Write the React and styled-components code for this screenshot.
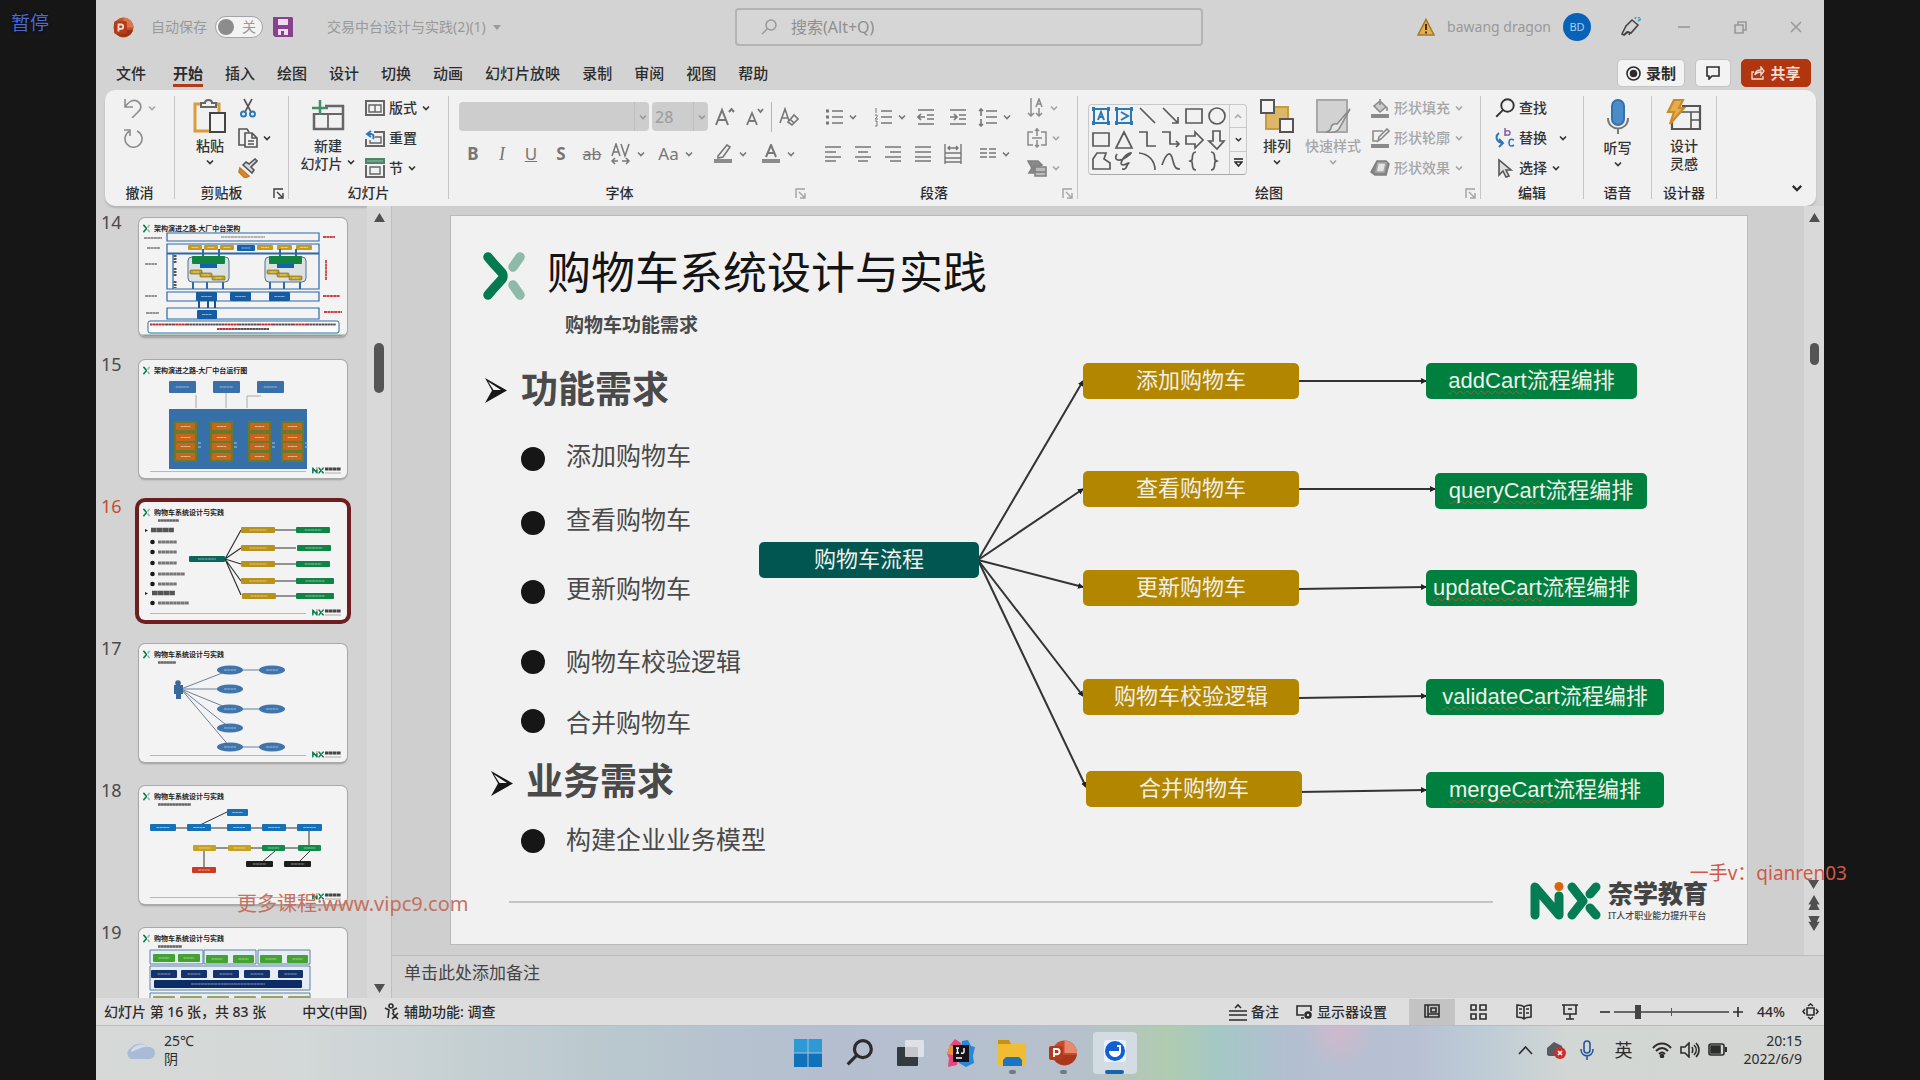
import styled, { createGlobalStyle, css } from "styled-components";

const GlobalStyle = createGlobalStyle`
  * {
    box-sizing: border-box;
  }

  body {
    margin: 0;
    background: #161616;
    font-family: "Noto Sans", "Noto Sans CJK SC", sans-serif;
    font-size: 14px;
    line-height: 18px;
    color: #2c2c2c;
  }

  button, input, select {
    font: inherit;
    color: inherit;
  }

  button {
    background: none;
    border: none;
    padding: 0;
    white-space: nowrap;
  }
`

/* ---------- window ---------- */

const Screen = styled.div`
  position: relative;
  height: 100vh;
  padding: 0 5%;
  overflow: hidden;
`

const Desktop = styled.div`
  height: 100%;
  display: flex;
  flex-direction: column;
  background: #d3d3d3;
`

const TitleBar = styled.header`
  height: 56px;
  flex: none;
  display: grid;
  grid-template-columns: 639px minmax(200px, 468px) 1fr;
  align-items: center;
  padding-bottom: 2px;
  color: #999;
`

const TitleLeft = styled.div`
  display: flex;
  align-items: center;
  padding-left: 17px;
`

const TitleRight = styled.div`
  display: flex;
  align-items: center;
  justify-content: flex-end;
  padding-right: 19px;
`

const AutoSave = styled.label`
  display: flex;
  align-items: center;
  gap: 8px;
  margin: 0 10px 0 17px;
`

const Switch = styled.span`
  display: flex;
  align-items: center;
  justify-content: space-between;
  width: 48px;
  height: 22px;
  padding: 0 6px 0 2px;
  border: 1px solid #a5a5a5;
  border-radius: 11px;
  background: #f3f3f3;

  input {
    appearance: none;
    width: 16px;
    height: 16px;
    margin: 0;
    border-radius: 50%;
    background: #8c8c8c;
  }
`

const FileName = styled.button`
  display: flex;
  align-items: center;
  gap: 7px;
  margin-left: 34px;
`

const SearchBox = styled.label`
  display: flex;
  align-items: center;
  gap: 12px;
  height: 38px;
  padding-left: 24px;
  border: 2px solid #b4b4b4;
  border-radius: 4px;
  background: #d6d6d6;

  input {
    flex: 1;
    min-width: 0;
    border: none;
    outline: none;
    background: none;
    font-size: 16px;
  }

  input::placeholder {
    color: #8f8f8f;
    opacity: 1;
  }
`

const UserName = styled.span`
  margin: 0 12px;
`

const Avatar = styled.span`
  width: 28px;
  height: 28px;
  border-radius: 50%;
  background: #0863b8;
  color: #a9cdf0;
  font-size: 11px;
  line-height: 28px;
  text-align: center;
  margin-right: 30px;
`

const WindowButtons = styled.div`
  display: flex;
  margin-left: 15px;
`

const WindowButton = styled.button`
  display: flex;
  justify-content: center;
  width: 56px;
  color: #999;

  &:last-child {
    width: 18px;
    margin-left: 19px;
  }
`

/* ---------- tabs ---------- */

const TabBar = styled.nav`
  height: 34px;
  flex: none;
  display: flex;
  align-items: center;
  padding: 0 13px 0 20px;
`

const Tab = styled.button`
  height: 28px;
  margin-right: ${props => props.$first ? '27px' : '22px'};
  padding-top: 3px;
  font-size: 15px;
  font-weight: ${props => props.$active ? 700 : 500};
  border-bottom: 3px solid ${props => props.$active ? '#b33a1b' : 'transparent'};
`

const TabActions = styled.div`
  display: flex;
  gap: 10px;
  margin-left: auto;
`

const ActionButton = styled.button`
  display: flex;
  align-items: center;
  justify-content: center;
  gap: 5px;
  width: ${props => props.$w}px;
  height: 28px;
  border-radius: 5px;
  border: 1px solid ${props => props.$primary ? '#b1350e' : '#c4c4c4'};
  background: ${props => props.$primary ? '#b1350e' : '#f3f3f3'};
  color: ${props => props.$primary ? '#f6dcd2' : '#2c2c2c'};
  font-size: 15px;
  font-weight: 700;
`

/* ---------- ribbon ---------- */

const Ribbon = styled.section`
  flex: none;
  display: flex;
  height: 116px;
  margin: 0 8px 0 9px;
  padding: 6px 0 7px;
  border-radius: 10px;
  background: #f1f1f1;
  box-shadow: 0 2px 2px #b4b4b4;
  font-weight: 500;
`

const Group = styled.div`
  flex: none;
  display: flex;
  flex-direction: column;
  width: ${props => props.$w}px;
  border-right: 1px solid ${props => props.$faint ? 'transparent' : '#c6c6c6'};
`

const GroupBody = styled.div`
  flex: 1;
  display: flex;
  align-items: flex-start;
  padding-left: ${props => props.$pad || 0}px;
`

const GroupLabel = styled.div`
  display: grid;
  grid-template-columns: ${props => props.$launcher ? '1fr 20px' : '1fr'};
  align-items: center;
  text-align: center;
  line-height: 12px;
`

const Launcher = styled.button`
  display: flex;
  justify-content: center;
  color: ${props => props.$dim ? '#a2a2a2' : '#3c3c3c'};
`

const Stack = styled.div`
  display: flex;
  flex-direction: column;
  gap: 6px;
  margin-left: ${props => props.$ml || 0}px;
`

const SmallButton = styled.button`
  display: flex;
  align-items: center;
  gap: 4px;
  height: 24px;
  color: ${props => props.$dim ? '#a6a6a6' : '#333'};
`

const BigButton = styled.button`
  display: flex;
  flex-direction: column;
  align-items: center;
  width: ${props => props.$w}px;
  margin-left: ${props => props.$ml || 0}px;
  padding-top: 3px;
  color: ${props => props.$dim ? '#a6a6a6' : '#333'};

  svg:first-child {
    margin-bottom: 4px;
  }
`

const BigLine = styled.span`
  display: flex;
  align-items: center;
  gap: 3px;
  height: 18px;
`

const ToolRows = styled.div`
  display: flex;
  flex-direction: column;
  gap: 7px;
  padding-top: 6px;
  width: ${props => props.$w}px;
`

const ToolRow = styled.div`
  display: flex;
  height: 30px;
  padding-left: ${props => props.$pad || 0}px;
`

const Tool = styled.button`
  flex: none;
  display: flex;
  align-items: center;
  justify-content: center;
  gap: 5px;
  width: ${props => props.$w}px;
  color: #777;
  ${props => props.$line && css`
    border-left: 1px solid #b5b5b5;
  `}
`

const Glyph = styled.span`
  font-size: ${props => props.$size || 17}px;
  font-weight: ${props => props.$bold ? 700 : 400};
  font-style: ${props => props.$italic ? 'italic' : 'normal'};
  font-family: ${props => props.$serif ? '"Liberation Serif", serif' : 'inherit'};
  text-decoration: ${props => props.$deco || 'none'};
`

const Picker = styled.span`
  display: flex;
  align-items: center;
  width: ${props => props.$w}px;
  height: 29px;
  margin-right: 3px;
  padding-right: 1px;
  border-radius: 4px;
  background: #cdcdcd;
  color: #999;

  select {
    appearance: none;
    flex: 1;
    min-width: 0;
    height: 29px;
    padding-left: 3px;
    border: none;
    border-right: 1px solid #bdbdbd;
    margin-right: 3px;
    background: none;
    color: #a0a0a0;
    font-size: 16px;
    opacity: 1;
  }
`

const Gallery = styled.div`
  display: flex;
  width: 159px;
  height: 71px;
  margin-top: 8px;
  border: 1px solid #c9c9c9;
  border-bottom-color: #a8a8a8;
  border-radius: 4px;
`

const GalleryArrows = styled.div`
  display: flex;
  flex-direction: column;
  width: 17px;
  border-left: 1px solid #c9c9c9;

  button {
    flex: 1;
    display: flex;
    align-items: center;
    justify-content: center;
  }

  button + button {
    border-top: 1px solid #c9c9c9;
  }
`

const Collapse = styled.button`
  align-self: flex-end;
  margin: 0 12px 0 auto;
`

/* ---------- workspace ---------- */

const Workspace = styled.main`
  flex: 1;
  min-height: 0;
  display: grid;
  grid-template-columns: 296px minmax(0, 1fr);
`

const ThumbPanel = styled.aside`
  min-height: 0;
  overflow: hidden;
  display: flex;
  border-right: 1px solid #bfbfbf;
`

const ThumbList = styled.ol`
  flex: 1;
  margin: 0;
  padding: 12px 0 0 5px;
  list-style: none;
  display: flex;
  flex-direction: column;
  gap: 24px;
`

const ThumbRow = styled.li`
  flex: none;
  display: grid;
  grid-template-columns: 38px 208px;
  height: 118px;
  font-size: 18px;
  line-height: 8px;
  color: ${props => props.$active ? '#c04f30' : '#4a4a4a'};
`

const ThumbCard = styled.button`
  display: block;
  height: 118px;
  overflow: hidden;
  border-radius: 6px;
  background: #f3f3f3;
  box-shadow: ${props => props.$active ? '0 0 0 4px #6d1f1f' : '0 0 0 1px #a9a9a9, 0 2px 2px #9d9d9d'};

  svg {
    display: block;
  }
`

const ScrollTrack = styled.div`
  flex: none;
  display: flex;
  flex-direction: column;
  align-items: center;
  width: ${props => props.$w}px;
  padding: 7px 0 5px;
  background: #d9d9d9;
  color: #505050;
`

const ScrollSpace = styled.div`
  flex: ${props => props.$grow};
`

const ScrollThumb = styled.div`
  width: ${props => props.$w}px;
  height: ${props => props.$h}px;
  border-radius: 5px;
  background: #555;
`

const Editor = styled.div`
  min-height: 0;
  display: flex;
  flex-direction: column;
`

const StageRow = styled.div`
  flex: 1;
  min-height: 0;
  display: flex;
  background: #cfcfcf;
`

const Stage = styled.div`
  flex: 1;
  min-width: 0;
  padding: 10px 57px 0 59px;
`

const Notes = styled.div`
  flex: none;
  height: 43px;
  padding: 8px 12px;
  border-top: 1px solid #bcbcbc;
  font-size: 17px;
  color: #444;
`

/* the slide is 1296 x 728 units, every object on it is placed in percent */
const Slide = styled.article`
  position: relative;
  aspect-ratio: 1296 / 728;
  background: #f1f1f1;
  outline: 1px solid #bababa;
`

const SlideObject = styled.div`
  position: absolute;
  left: ${props => props.$x / 12.96}%;
  top: ${props => props.$y / 7.28}%;
  display: flex;
  align-items: center;
`

const SlideText = styled(SlideObject)`
  margin: 0;
  transform: translateY(-50%);
  white-space: nowrap;
  font-size: ${props => props.$size}px;
  line-height: ${props => props.$size}px;
  font-weight: ${props => props.$bold ? 700 : 400};
  color: ${props => props.$color || '#4a4a4a'};
`

const Bullet = styled(SlideObject)`
  width: 24px;
  height: 24px;
  border-radius: 50%;
  background: #161616;
`

const Node = styled(SlideObject)`
  justify-content: center;
  width: ${props => props.$w / 12.96}%;
  height: 36px;
  border-radius: 5px;
  background: ${props => props.$fill};
  color: #f0f0ea;
  font-family: "Liberation Sans", "Noto Sans CJK SC", sans-serif;
  font-size: 22px;
  line-height: 26px;
  white-space: nowrap;

  u {
    text-decoration: underline wavy #a85a30 1px;
    text-underline-offset: 2px;
    text-decoration-skip-ink: none;
  }
`

const Lines = styled.svg`
  position: absolute;
  inset: 0;
  width: 100%;
  height: 100%;
`

const Brand = styled(SlideObject)`
  gap: 7px;
`

const BrandText = styled.div`
  display: flex;
  flex-direction: column;
  gap: 5px;
  white-space: nowrap;
  color: #444;

  strong {
    font-size: 25px;
    line-height: 25px;
    font-weight: 900;
  }

  small {
    font-size: 9px;
    line-height: 9px;
    font-weight: 500;
  }
`

/* ---------- status bar ---------- */

const StatusBar = styled.footer`
  flex: none;
  display: flex;
  align-items: center;
  height: 28px;
  padding: 0 5px 0 8px;
  background: #dedede;
  border-bottom: 1px solid #b9bdbe;
  font-weight: 500;
`

const StatusItem = styled.button`
  display: flex;
  align-items: center;
  gap: 4px;
  margin-left: ${props => props.$ml || 0}px;
`

const StatusRight = styled.div`
  display: flex;
  align-items: center;
  margin-left: auto;
`

const ViewButton = styled.button`
  display: flex;
  align-items: center;
  justify-content: center;
  width: 46px;
  height: 26px;
  background: ${props => props.$active ? '#c3c3c3' : 'none'};
`

const ZoomRange = styled.input`
  appearance: none;
  width: 115px;
  height: 16px;
  margin: 0 4px;
  background:
    linear-gradient(#555, #555) 57px 50% / 1px 8px no-repeat,
    linear-gradient(#666, #666) 0 50% / 100% 2px no-repeat;

  &::-webkit-slider-thumb {
    appearance: none;
    width: 6px;
    height: 14px;
    background: #444;
  }
`

/* ---------- taskbar ---------- */

const Taskbar = styled.footer`
  flex: none;
  display: grid;
  grid-template-columns: 1fr auto 1fr;
  align-items: center;
  height: 54px;
  padding: 0 22px 6px 28px;
  background:
    radial-gradient(circle at 72% 10%, #cfb9cb 0, transparent 3%),
    linear-gradient(90deg, #d6d9d7 0, #d3d8d8 12%, #b9c8ce 30%, #b4bed0 42%, #b6c1cc 57%, #b0cbb0 62%, #a4c8c6 65%, #b3bfd0 69%, #b8c0d3 76%, #bccbd6 80%, #d2d6d4 85%, #d4d6d3 100%);
`

const Weather = styled.div`
  display: flex;
  align-items: center;
  gap: 8px;
`

const Apps = styled.div`
  display: flex;
  align-items: flex-start;
  padding-top: 5px;
  margin-right: 7px;
`

const AppButton = styled.button`
  display: flex;
  flex-direction: column;
  align-items: center;
  justify-content: space-between;
  width: ${props => props.$active ? 44 : 51}px;
  height: 42px;
  margin-left: ${props => props.$active ? 4 : 0}px;
  padding-top: 7px;
  border-radius: 4px;
  background: ${props => props.$active ? '#d3dce2' : 'none'};

  &::after {
    content: "";
    width: ${props => props.$active ? 19 : 7}px;
    height: 4px;
    border-radius: 2px;
    background: ${props => props.$active ? '#1763ae' : props.$open ? '#737982' : 'transparent'};
  }
`

const Tray = styled.div`
  display: flex;
  align-items: center;
  justify-content: flex-end;
  gap: 8px;
`

const TrayLanguage = styled.span`
  margin: 0 11px 0 12px;
  font-size: 18px;
`

const TrayGroup = styled.span`
  display: flex;
  align-items: center;
  gap: 13px;
`

const Clock = styled.time`
  margin-left: 8px;
  text-align: right;
`

/* ---------- overlays ---------- */

const PauseTag = styled.div`
  position: absolute;
  left: 11px;
  top: 12px;
  font-size: 19px;
  line-height: 22px;
  color: #4a68d8;
  text-shadow: 0 0 3px #000;
`

const Watermark = styled.div`
  position: absolute;
  ${props => props.$side === 'left' ? 'left: 237px;' : 'right: 73px;'}
  top: ${props => props.$top}px;
  font-size: ${props => props.$size}px;
  line-height: 24px;
  color: ${props => props.$side === 'left' ? '#c4715f' : '#d0594a'};
`

/* ---------- icons ---------- */

const Svg = ({ w = 20, h = 20, vb, children, ...rest }) => (
  <svg width={w} height={h} viewBox={vb || `0 0 ${w} ${h}`} fill="none" stroke="currentColor" strokeWidth="1.6" aria-hidden="true" {...rest}>{children}</svg>
)

const Chevron = ({ w = 10 }) => <Svg w={w} h={w} vb="0 0 10 10"><path d="M2 3.500 5 6.500 8 3.500" /></Svg>
const Caret = () => <Svg w={8} h={5} stroke="none" fill="currentColor"><path d="M0 0h8L4 5z" /></Svg>
const LaunchIcon = () => <Svg w={11} h={11} strokeWidth="1.4"><path d="M1 10V1h9M4 4l5 5M10 5v5H5" /></Svg>
const Triangle = ({ down }) => <Svg w={11} h={9} stroke="none" fill="currentColor"><path d={down ? "M0 0h11L5.500 9z" : "M0 9h11L5.500 0z"} /></Svg>
const DoubleTriangle = ({ down }) => <Svg w={12} h={15} vb="0 0 12 16" stroke="none" fill="currentColor"><path d={down ? "M0 0h12L9 6h3L6 16 0 6h3z" : "M0 16h12L9 10h3L6 0 0 10h3z"} /></Svg>

const PptIcon = ({ size = 22 }) => (
  <Svg w={size} h={size} vb="0 0 28 28" stroke="none">
    <circle cx="15.500" cy="14" r="12.500" fill="#c9492a" />
    <path d="M15.500 1.500a12.500 12.500 0 0 1 12.500 12.500h-12.500z" fill="#e58a6c" />
    <path d="M3.200 16a12.500 12.500 0 0 0 24.600 0z" fill="#a8381c" />
    <rect x="0" y="7" width="14" height="14" rx="2" fill="#b23a1a" />
    <path d="M5 18v-8h3a2.600 2.600 0 0 1 0 5.200H5" stroke="#fff" strokeWidth="1.900" />
  </Svg>
)

/* the title bar logo has a wider, darker tile than the taskbar one */
const PptBadge = () => (
  <Svg w={21} h={21} stroke="none">
    <circle cx="10.500" cy="10.500" r="10" fill="#c4512c" />
    <path d="M10.500.500a10 10 0 0 1 10 10h-10z" fill="#d9764f" />
    <path d="M1 13a10 10 0 0 0 19 0z" fill="#9c3314" />
    <rect x="1" y="4" width="13" height="13" rx="2" fill="#b53c18" />
    <path d="M5.500 14.500V7.500H8a2.200 2.200 0 0 1 0 4.400H5.500" stroke="#f5ddd2" strokeWidth="1.800" />
  </Svg>
)

const SaveIcon = () => (
  <Svg w={20} h={20} stroke="none">
    <path d="M0 0h19l1 1v19H2l-2-2V0z" fill="#88418f" />
    <path d="M5 2h10v6H5zM5 12h10v6H5z" fill="#eedcf0" />
    <path d="M8 14h3v4H8z" fill="#88418f" />
  </Svg>
)

const SearchIcon = ({ size = 16, sw = 1.500 }) => <Svg w={size} h={size} vb="0 0 16 16" strokeWidth={sw}><circle cx="10" cy="6" r="5" /><path d="M6.300 9.700 1 15" /></Svg>
const WarnIcon = () => <Svg w={18} h={18}><path d="M9 1.500 17 17H1z" fill="#e2ae4e" stroke="#a87826" /><path d="M9 6v6M9 13.500v2" stroke="#443018" strokeWidth="2" /></Svg>
const PenIcon = () => <Svg w={20} h={20} stroke="#444"><path d="M11 3 17 8 10 16 7 15 3 18 1 17 5 9z" /><path d="M3 18l3-3 3 1-1 2" /><path d="M14 2l1-2M17 4l3-2M17 1l2-1" stroke="#3aa0c0" /></Svg>
const UndoIcon = () => <Svg stroke="#8d8d8d"><path d="M2 1v8h8M2 9C5 4 10 1 14 3c5 3 5 8 1 11l-6 6" /></Svg>
const RedoIcon = () => <Svg stroke="#8d8d8d"><path d="M1 2h6v6M7 3a8.500 8.500 0 1 0 7 0" /></Svg>

const PasteIcon = () => (
  <Svg w={34} h={34} strokeWidth="2">
    <path d="M9 5H2v27h15M22 5h4v8" stroke="#dd9c3a" strokeWidth="3" />
    <path d="M8 8V4h4c0-4 7-4 7 0h4v4z" fill="#f1f1f1" stroke="#666" />
    <path d="M17 14h15v19H17z" fill="#f4f4f4" stroke="#444" />
  </Svg>
)
const CutIcon = () => <Svg stroke="#555"><path d="M6 1l7 13M14 1 7 14" /><circle cx="5.500" cy="16" r="2.500" stroke="#2b78b8" strokeWidth="2" /><circle cx="14.500" cy="16" r="2.500" stroke="#2b78b8" strokeWidth="2" /></Svg>
const CopyIcon = () => <Svg stroke="#555"><path d="M7 17H1V1h8l2 3M7 5h7l5 5v9H7zM14 5v5h5M10 13h6M10 16h6" /></Svg>
const BrushIcon = () => <Svg><path d="M2 10l9 8-4 2-6-6z" fill="#dc8a28" stroke="#c87820" /><path d="M5 7l9 8 2-3-3-3 6-6-2-2-6 5-3-2z" fill="#d8d8d8" stroke="#555" /></Svg>
const NewSlideIcon = () => <Svg w={34} h={34} strokeWidth="2.500" stroke="#666"><path d="M14 7h18v23H3V14" /><path d="M3 15h29M17 15v15" strokeWidth="1.800" /><path d="M9 1v15M1 9h16" stroke="#3f9068" /></Svg>
const LayoutIcon = () => <Svg w={20} h={16} strokeWidth="2" stroke="#666"><path d="M1 1h18v14H1z" /><path d="M4 5h12v7H4zM10 5v7" strokeWidth="1.400" /></Svg>
const ResetIcon = () => <Svg w={20} h={17} strokeWidth="2" stroke="#666"><path d="M9 2h10v14H1V9" /><path d="M10 7h6v6H5v-3" strokeWidth="1.400" /><path d="M6 1 2 4l4 3M2 4h4c3 0 3 3 2 5" stroke="#2b78b8" /></Svg>
const SectionIcon = () => <Svg w={20} h={20} strokeWidth="2" stroke="#666"><path d="M1 1h18v4H1z" fill="#6fa486" stroke="#4f8468" /><path d="M1 7v12h18V7" /><path d="M5 9h10v7H5z" strokeWidth="1.400" /></Svg>

const ClearIcon = () => <Svg><path d="M1 16 6 2l4 12M3 11h6" /><path d="m9 15 6-7 4 4-6 6zM11 12l4 4" /></Svg>
const HighlightIcon = () => <Svg><path d="M5 12 14 1l3 2-7 10-5 1z" /><path d="M1 17h18" strokeWidth="4" stroke="#8c8c8c" /></Svg>
const FontColorIcon = () => <Svg><path d="M5 13 10 1l5 12M7 9h6" strokeWidth="2" /><path d="M1 17h18" strokeWidth="4" stroke="#8c8c8c" /></Svg>
const SpacingIcon = () => <Svg w={20} h={22} strokeWidth="1.500"><path d="m1 13 4-12 4 12M2.500 9h5M10 1l4 12 4-12M1 18h6M11 18h7M4 15l-3 3 3 3M15 15l3 3-3 3" /></Svg>
const BulletsIcon = () => <Svg w={18} h={18}><path d="M7 3h11M7 9h11M7 15h11" /><path d="M1 3h3M1 9h3M1 15h3" strokeWidth="3" /></Svg>
const NumbersIcon = () => <Svg w={18} h={20}><path d="M7 4h11M7 10h11M7 16h11" /><path d="M2 1v5M1 8h2v2l-2 2h3M1 14h2v5H1" strokeWidth="1" /></Svg>
const IndentIcon = ({ out }) => <Svg w={18} h={18}><path d="M1 2h16M10 7h7M10 11h7M1 16h16" /><path d={out ? "M8 9H1M4 6 1 9l3 3" : "M1 9h7M5 6l3 3-3 3"} /></Svg>
const LineSpaceIcon = () => <Svg w={19} h={19}><path d="M8 3h11M8 9h11M8 15h11M3 1v7M3 11v7M1 3l2-2 2 2M1 16l2 2 2-2" /></Svg>
const AlignIcon = ({ d }) => <Svg w={18} h={18}><path d={d} /></Svg>
const DistributeIcon = () => <Svg w={18} h={20}><path d="M1 0v20M17 0v20M1 9h16M1 14h16M1 18h16M4 4h10M6 2 4 4l2 2M12 2l2 2-2 2" strokeWidth="1.400" /></Svg>
const ColumnsIcon = () => <Svg w={16} h={14}><path d="M0 2h7M0 6h7M0 10h7M9 2h7M9 6h7M9 10h7" /></Svg>
const TextDirIcon = () => <Svg w={18} h={20}><path d="M4 0v18M1 15l3 3 3-3M12 10v8M9 15l3 3 3-3M9 9l3-8 3 8M10 6h4" strokeWidth="1.500" stroke="#8a8a8a" /></Svg>
const TextAlignIcon = () => <Svg w={20} h={20}><path d="M6 4H1v13h5M14 4h5v13h-5M5 10h10M10 0v8M10 12v8M8 3l2-2 2 2M8 17l2 2 2-2" strokeWidth="1.500" stroke="#8a8a8a" /></Svg>
const SmartArtIcon = () => <Svg w={20} h={18} stroke="#808080"><path d="M1 2h10l4 4-2 1H7v7H2l3-5z" fill="#8a8a8a" /><path d="M8 8h11v9H8z" fill="#bbb" /><path d="M8 13h11" /></Svg>

const ArrangeIcon = () => <Svg w={34} h={34} strokeWidth="2"><path d="M6 8h22v22H6z" fill="#dcb767" stroke="#c99a3c" /><path d="M1 1h13v13H1zM20 20h13v13H20z" fill="#f4f4f4" stroke="#555" /></Svg>
const QuickStyleIcon = () => <Svg w={36} h={34}><path d="M2 1h30v32H2z" fill="#d2d2d2" stroke="#a8a8a8" strokeWidth="2" /><path d="M35 10 22 25c-3-1-6 1-6 4 0 2-2 3-4 4 6 1 11 0 13-5z" fill="#e6e6e6" stroke="#8c8c8c" /></Svg>
const FillIcon = () => <Svg stroke="#8a8a8a"><path d="m4 8 6-5 6 6-6 5zM10 1v6M17 9v4" fill="#ccc" /><path d="M1 18h18" strokeWidth="4" /></Svg>
const OutlineIcon = () => <Svg stroke="#8a8a8a"><path d="M13 3H3v10h4M8 13l1-4 8-8 2 2-8 8z" /><path d="M1 18h18" strokeWidth="4" /></Svg>
const EffectIcon = () => <Svg><path d="m7 3 9 0 3 3-3 11H5l-4-3z" fill="#888" stroke="#808080" /><path d="M8 5h8l-2 9H6z" fill="#e4e4e4" /></Svg>
const ReplaceIcon = () => <Svg w={20} h={22}><path d="M10 1v8M10 6c0-3 5-3 5 0s-5 3-5 0" stroke="#8c6aa8" /><path d="M19 13c-4-2-5 0-5 3s2 4 5 2" stroke="#2b78b8" /><path d="M4 6c-4 3-3 9 3 10M4 12l4 4-4 4" stroke="#2b78b8" strokeWidth="2" /></Svg>
const CursorIcon = () => <Svg><path d="M4 2v15l4-4 3 6 3-1-3-6h5z" fill="#ddd" stroke="#555" /></Svg>
const MicIcon = () => <Svg w={24} h={36} strokeWidth="2" stroke="#777"><rect x="6" y="1" width="12" height="25" rx="6" fill="#4a8bc8" stroke="#3571aa" /><path d="M2 19c0 14 20 14 20 0M12 29v6" /></Svg>
const IdeasIcon = () => <Svg w={36} h={34} strokeWidth="2.200" stroke="#555"><path d="M16 7h18v23H6v-8" /><path d="M15 13h19M25 13v17M25 21h9" strokeWidth="1.600" /><path d="M8 1h9l-4 8h5L4 25l4-12H2z" fill="#e4ad50" stroke="#cc8a26" /></Svg>

const ShapeGallery = () => (
  <Svg w={140} h={69} strokeWidth="1.700" stroke="#5a5a5a">
    <g stroke="#2c78b4" strokeWidth="2">
      <path d="M5 4h14v14H5z" /><path d="M28 4h14v14H28z" />
      <path d="m9 15 3-8 3 8M10 12h4M32 7l7 4-7 4" />
      <path d="M3 4h3M18 4h3M3 18h3M18 18h3M26 4h3M41 4h3M26 18h3M41 18h3" strokeWidth="4" />
    </g>
    <path d="m51 3 15 15M74 3l15 15M89 12v6h-6M97 4h16v14H97z" /><circle cx="128" cy="11" r="8" />
    <path d="M4 28h16v13H4zM35 27l8 16H27zM50 27h8v14h9M73 27h8v12h9M87 36l3 3-3 3M97 31h9v-4l8 8-8 8v-4h-9zM124 26h7v10h4l-7 8-8-8h4z" />
    <path d="M4 64V54l4-6h9l-2 6 6 4v6zM28 49c-4 6 2 8 8 4 4-3 8-6 5-5-6 2-12 12-7 12 3 0 8-4 5-1-2 2-1 6-6 5M50 48c10 1 16 8 16 17M73 60c5-14 9-14 11-4 2 8 4 8 7 8M107 47c-5 0-3 6-4 8l-2 1 2 1c1 2-1 8 4 8M122 47c5 0 3 6 4 8l2 1-2 1c-1 2 1 8-4 8" />
  </Svg>
)

const NxLogo = ({ w = 71, h = 38 }) => (
  <Svg w={w} h={h} vb="0 0 71 38" stroke="#047d55" strokeWidth="9" strokeLinecap="round" strokeLinejoin="round">
    <path d="M5 33V5l24 28V14" />
    <path d="m42 5 11 14-11 14M66 5l-6 7M66 33l-6-7" />
    <circle cx="29" cy="4.500" r="4.500" fill="#d9660c" stroke="none" />
  </Svg>
)

const XMark = ({ w = 42, h = 48 }) => (
  <Svg w={w} h={h} vb="0 0 42 48" strokeWidth="9.500" strokeLinecap="round" strokeLinejoin="round">
    <path d="m37 5-7 10M37 43l-7-10" stroke="#8dbaa9" />
    <path d="M5 5c13 16 15 15 15 19S18 27 5 43" stroke="#047a50" />
  </Svg>
)

const ArrowMark = () => (
  <Svg w={22} h={25} stroke="none">
    <path d="M0 0l22 12.500L0 25l7-12.500z" fill="#161616" />
    <path d="M3 3.500l13 8.500H8.500z" fill="#f1f1f1" />
  </Svg>
)

/* ---------- thumbnails ---------- */

const Boxes = ({ items, h, fill, rx = 1, ...rest }) => items.map(([x, y, w]) => (
  <g key={`${x}-${y}`}>
    <rect x={x} y={y} width={w} height={h} rx={rx} fill={fill} {...rest} />
    <path d={`M${x + w * 0.25} ${y + h / 2}h${w * 0.5}`} stroke="#fff" strokeOpacity=".5" strokeWidth="1" strokeDasharray="3 .3" />
  </g>
))

const ThumbFrame = ({ title, sub, brand = true, children }) => (
  <svg width="208" height="118" viewBox="0 0 208 118" aria-hidden="true">
    <g transform="translate(4 6)"><XMark w={7} h={9} /></g>
    <text x="15" y="13" fontSize="7" fontWeight="700" fill="#222">{title}</text>
    {sub && <path d={`M19 18.500h${sub}`} stroke="#666" strokeWidth="2.500" strokeDasharray="2.800 .2" />}
    {children}
    {brand && <>
      <path d="M11 111.500h156" stroke="#aaa" strokeWidth=".8" />
      <g transform="translate(173 107)"><NxLogo w={12} h={7} /></g>
      <path d="M186 109h16" stroke="#444" strokeWidth="3" strokeDasharray="3.500 .4" />
      <path d="M186 113h16" stroke="#999" strokeWidth=".8" />
    </>}
  </svg>
)

const Thumb14 = () => (
  <ThumbFrame title="架构演进之路-大厂中台架构" brand={false}>
    <g fill="none" stroke="#2a68a8" strokeWidth="1.200">
      <path d="M28 15h152v8H28zM28 26h152v9H28zM28 36h152v35H28zM28 74h152v9H28zM28 90h152v11H28zM34 36v35" />
    </g>
    <path d="M82 19h44" stroke="#777" strokeDasharray="3 .3" />
    <path d="M5 20h18M8 30h13M6 46h12M6 78h12M7 95h13" stroke="#777" strokeWidth="1.500" strokeDasharray="3 .3" />
    <path d="M184 19h12M184 78h17M185 94h18M187 42v20" stroke="#c44" strokeWidth="1.800" strokeDasharray="3 .4" />
    <path d="M36 37v33" stroke="#555" strokeWidth="3" strokeDasharray="2 1 2 1 2 5" />
    <Boxes items={[[49, 27, 14], [65, 27, 14], [81, 27, 14], [118, 27, 16], [138, 27, 15], [157, 27, 16]]} h={5} fill="#c99a1c" />
    <Boxes items={[[98, 27, 18]]} h={6} fill="#1462ac" />
    {[0, 77].map(x => (
      <g key={x} transform={`translate(${x} 0)`}>
        <path d="M64 31v8M80 31v8M54 64v7M68 64v7M84 64v7" stroke="#2a68a8" strokeWidth="2" />
        <rect x="49" y="39" width="41" height="25" rx="4" fill="#dce2e4" stroke="#52718c" />
        <rect x="53" y="38" width="33" height="8" rx="1" fill="#118442" />
        <rect x="61" y="46" width="17" height="4" fill="#1462ac" />
        <Boxes items={[[51, 52, 12], [61, 55, 12], [73, 58, 13]]} h={4} fill="#c9a41c" stroke="#665a22" strokeWidth=".6" />
      </g>
    ))}
    <Boxes items={[[57, 74, 21], [91, 74, 21], [130, 74, 21], [58, 92, 20]]} h={9} fill="#145ca4" />
    <path d="M60 83v7M69 83v7M76 83v7" stroke="#245082" strokeWidth="2" />
    <rect x="9" y="103" width="191" height="12" rx="2" fill="#fff" stroke="#2a68a8" />
    <path d="M11 106.500h16M34 106.500h14M86 106.500h14M120 106.500h14M154 106.500h14M78 111h18" stroke="#c23030" strokeWidth="2.200" strokeDasharray="2.600 .3" />
    <path d="M27 106.500h7M48 106.500h38M100 106.500h20M134 106.500h20M168 106.500h29M96 111h34" stroke="#5c5058" strokeWidth="2" strokeDasharray="2.600 .3" />
    <path d="M0 117.500h208" stroke="#7fa98a" strokeWidth="2" />
  </ThumbFrame>
)

const Thumb15 = () => (
  <ThumbFrame title="架构演进之路-大厂中台运行图">
    <Boxes items={[[30, 21, 27], [74, 21, 27], [118, 21, 27]]} h={12} fill="#3a70aa" />
    <path d="M57 35v13M87 33v15M108 48V36h14" stroke="#aaa" fill="none" />
    <rect x="30" y="49" width="138" height="60" fill="#376fa8" />
    {[35, 71, 109, 142].map(x => (
      <g key={x}>
        <rect x={x} y="61" width="23" height="41" fill="#687a2c" />
        <Boxes items={[[x + 2, 63, 19], [x + 2, 74, 19], [x + 2, 83, 19], [x + 2, 93, 19]]} h={7} fill="#c9651a" />
        <path d={`M${x + 24} 83h3M${x + 24} 87h3`} stroke="#a8c6de" />
      </g>
    ))}
  </ThumbFrame>
)

const Thumb16 = () => (
  <ThumbFrame title="购物车系统设计与实践" sub={21}>
    <path d="M12 28h23M13 91h23" stroke="#555" strokeWidth="4.500" strokeDasharray="5.500 .3" />
    <path d="M19 40h19M19 50h19M19 61h19M19 72h27M19 82h19M19 101h31" stroke="#777" strokeWidth="2.800" strokeDasharray="3.500 .3" />
    {[40, 50, 61, 72, 82, 101].map(y => <circle key={y} cx="13.500" cy={y} r="2.300" fill="#1a1a1a" />)}
    <path d="m6 27 3 1.500L6 30M6 90l3 1.500L6 93" fill="#222" />
    <path d="M86 57 102 28M86 57l16-11M86 57l16 5M86 57l16 22M86 57l16 36M136 28h21M136 46h21M136 62h21M136 79h21M136 94h21" stroke="#333" strokeWidth="1.200" />
    <Boxes items={[[50, 54, 36]]} h={6} fill="#0b655c" />
    <Boxes items={[[102, 25, 34], [102, 43, 34], [102, 59, 34], [102, 76, 34], [103, 91, 34]]} h={6} fill="#b8921a" />
    <Boxes items={[[157, 25, 34], [158, 43, 34], [157, 59, 34], [157, 76, 38], [157, 91, 38]]} h={6} fill="#108446" />
  </ThumbFrame>
)

const Thumb17 = () => (
  <ThumbFrame title="购物车系统设计与实践" sub={18}>
    <path d="M42 45 91 26M42 45h49M42 45l49 20M42 45l49 39M42 45l49 58M91 26h42M91 65h42M91 103h42" stroke="#6c8099" strokeWidth="1" />
    {[[91, 26], [133, 26], [91, 45], [91, 65], [133, 65], [91, 84], [91, 103], [133, 103]].map(([x, y]) => (
      <g key={`${x}-${y}`}>
        <ellipse cx={x} cy={y} rx="13" ry="4.500" fill="#3f74ac" />
        <path d={`M${x - 6} ${y}h12`} stroke="#9fbad6" strokeDasharray="3 .3" />
      </g>
    ))}
    <circle cx="39" cy="39" r="2.800" fill="#38699c" />
    <path d="M35 41h9v9h-2v5h-5v-5h-2z" fill="#38699c" />
  </ThumbFrame>
)

const Thumb18 = () => (
  <ThumbFrame title="购物车系统设计与实践" sub={33}>
    <path d="M36 42h122M61 39l27-13M170 44v18M60 62h110M65 64v20M136 65l-14 12M171 65l-12 12" stroke="#333" strokeWidth="1" />
    <Boxes items={[[11, 38, 26], [48, 38, 24], [88, 38, 24], [123, 38, 24], [158, 38, 25], [88, 23, 21]]} h={7} fill="#1670b8" />
    <Boxes items={[[54, 59, 23], [89, 59, 23]]} h={6} fill="#c9a21c" />
    <Boxes items={[[123, 59, 23], [159, 59, 23]]} h={6} fill="#128a48" />
    <Boxes items={[[107, 75, 27], [145, 75, 27]]} h={6} fill="#1d1d1d" />
    <Boxes items={[[53, 81, 24]]} h={6} fill="#cc3a22" />
  </ThumbFrame>
)

const Thumb19 = () => (
  <ThumbFrame title="购物车系统设计与实践" sub={24} brand={false}>
    <path d="M11 22h53v14H11zM65 22h52v14H65zM119 22h52v14h-52zM11 38h160v24H11zM11 65h160v40H11z" fill="#e6eef4" stroke="#5a82a4" />
    <Boxes items={[[14, 26, 22], [39, 26, 22], [67, 27, 22], [94, 27, 21], [121, 27, 22], [148, 27, 21]]} h={8} fill="#42a232" />
    <Boxes items={[[12, 42, 26], [42, 42, 26], [74, 42, 26], [105, 42, 26], [139, 42, 25]]} h={8} fill="#14326c" />
    <Boxes items={[[15, 52, 148]]} h={8} fill="#0c2c66" />
    <Boxes items={[[14, 68, 22], [41, 68, 22], [68, 68, 22], [95, 68, 22], [122, 68, 22], [149, 68, 22]]} h={8} fill="#98a45c" />
  </ThumbFrame>
)

/* ---------- data ---------- */

const tabs = ['文件', '开始', '插入', '绘图', '设计', '切换', '动画', '幻灯片放映', '录制', '审阅', '视图', '帮助']

const thumbs = [
  { n: 14, Art: Thumb14 },
  { n: 15, Art: Thumb15 },
  { n: 16, Art: Thumb16, active: true },
  { n: 17, Art: Thumb17 },
  { n: 18, Art: Thumb18 },
  { n: 19, Art: Thumb19 },
]

const outline = [
  { y: 239, dot: 231, text: '添加购物车' },
  { y: 303, dot: 295, text: '查看购物车' },
  { y: 372, dot: 364, text: '更新购物车' },
  { y: 445, dot: 434, text: '购物车校验逻辑' },
  { y: 506, dot: 493, text: '合并购物车' },
  { y: 623, dot: 613, text: '构建企业业务模型' },
]

const steps = [
  { x: 632, y: 147, text: '添加购物车' },
  { x: 632, y: 255, text: '查看购物车' },
  { x: 632, y: 354, text: '更新购物车' },
  { x: 632, y: 463, text: '购物车校验逻辑' },
  { x: 635, y: 555, text: '合并购物车' },
]

const flows = [
  { x: 975, y: 147, w: 211, name: 'addCart' },
  { x: 984, y: 257, w: 212, name: 'queryCart' },
  { x: 975, y: 354, w: 211, name: 'updateCart' },
  { x: 975, y: 463, w: 238, name: 'validateCart' },
  { x: 975, y: 556, w: 238, name: 'mergeCart' },
]

const links = [
  [527, 344, 632, 165], [527, 344, 632, 273], [527, 344, 632, 371], [527, 344, 632, 480], [527, 344, 635, 571],
  [848, 165, 975, 165], [848, 273, 984, 273], [848, 373, 975, 371], [848, 482, 975, 480], [848, 576, 975, 574],
]

const Launch = ({ children, dim }) => (
  <GroupLabel $launcher>{children}<Launcher $dim={dim} aria-label="更多选项"><LaunchIcon /></Launcher></GroupLabel>
)

const RibbonBar = () => (
  <Ribbon>
    <Group $w={70}>
      <GroupBody $pad={18}>
        <Stack>
          <SmallButton $dim aria-label="撤消"><UndoIcon /><Chevron /></SmallButton>
          <SmallButton $dim aria-label="恢复"><RedoIcon /></SmallButton>
        </Stack>
      </GroupBody>
      <GroupLabel>撤消</GroupLabel>
    </Group>

    <Group $w={114}>
      <GroupBody $pad={14}>
        <BigButton $w={42}><PasteIcon /><BigLine>粘贴</BigLine><BigLine><Chevron /></BigLine></BigButton>
        <Stack $ml={7}>
          <SmallButton aria-label="剪切"><CutIcon /></SmallButton>
          <SmallButton aria-label="复制"><CopyIcon /><Chevron /></SmallButton>
          <SmallButton aria-label="格式刷"><BrushIcon /></SmallButton>
        </Stack>
      </GroupBody>
      <Launch>剪贴板</Launch>
    </Group>

    <Group $w={160}>
      <GroupBody $pad={8}>
        <BigButton $w={62}><NewSlideIcon /><BigLine>新建</BigLine><BigLine>幻灯片<Chevron /></BigLine></BigButton>
        <Stack $ml={6}>
          <SmallButton><LayoutIcon />版式<Chevron /></SmallButton>
          <SmallButton><ResetIcon />重置</SmallButton>
          <SmallButton><SectionIcon />节<Chevron /></SmallButton>
        </Stack>
      </GroupBody>
      <GroupLabel>幻灯片</GroupLabel>
    </Group>

    <Group $w={362} $faint>
      <GroupBody $pad={10}>
        <ToolRows>
          <ToolRow>
            <Picker $w={190}><select disabled aria-label="字体"><option> </option></select><Chevron /></Picker>
            <Picker $w={56}><select disabled aria-label="字号"><option>28</option></select><Chevron /></Picker>
            <Tool $w={28} aria-label="增大字号"><Svg w={20} h={20}><path d="M1 18 7 3l6 15M3 13h8M14 5l2.500-3L19 5" strokeWidth="2" /></Svg></Tool>
            <Tool $w={32} aria-label="减小字号"><Svg w={18} h={20}><path d="M1 18 6 6l5 12M3 14h6M12 2l2.500 3L17 2" strokeWidth="1.800" /></Svg></Tool>
            <Tool $w={34} $line aria-label="清除格式"><ClearIcon /></Tool>
          </ToolRow>
          <ToolRow>
            <Tool $w={28}><Glyph $bold>B</Glyph></Tool>
            <Tool $w={30}><Glyph $italic $serif $size={18}>I</Glyph></Tool>
            <Tool $w={28}><Glyph $deco="underline">U</Glyph></Tool>
            <Tool $w={32}><Glyph $bold>S</Glyph></Tool>
            <Tool $w={30}><Glyph $size={16} $deco="line-through">ab</Glyph></Tool>
            <Tool $w={42} aria-label="字符间距"><SpacingIcon /><Chevron /></Tool>
            <Tool $w={54}><Glyph>Aa</Glyph><Chevron /></Tool>
            <Tool $w={54} aria-label="突出显示"><HighlightIcon /><Chevron /></Tool>
            <Tool $w={42} aria-label="字体颜色"><FontColorIcon /><Chevron /></Tool>
          </ToolRow>
        </ToolRows>
      </GroupBody>
      <Launch dim>字体</Launch>
    </Group>

    <Group $w={267}>
      <GroupBody>
        <ToolRows $w={216}>
          <ToolRow>
            <Tool $w={60} aria-label="项目符号"><BulletsIcon /><Chevron /></Tool>
            <Tool $w={38} aria-label="编号"><NumbersIcon /><Chevron /></Tool>
            <Tool $w={34} aria-label="减少缩进"><IndentIcon out /></Tool>
            <Tool $w={30} aria-label="增加缩进"><IndentIcon /></Tool>
            <Tool $w={44} aria-label="行距"><LineSpaceIcon /><Chevron /></Tool>
          </ToolRow>
          <ToolRow $pad={7}>
            <Tool $w={30} aria-label="左对齐"><AlignIcon d="M1 2h16M1 7h11M1 12h16M1 16h11" /></Tool>
            <Tool $w={30} aria-label="居中"><AlignIcon d="M1 2h16M4 7h10M1 12h16M4 16h10" /></Tool>
            <Tool $w={30} aria-label="右对齐"><AlignIcon d="M1 2h16M6 7h11M1 12h16M6 16h11" /></Tool>
            <Tool $w={30} aria-label="两端对齐"><AlignIcon d="M1 2h16M1 7h16M1 12h16M1 16h16" /></Tool>
            <Tool $w={30} aria-label="分散对齐"><DistributeIcon /></Tool>
            <Tool $w={54} aria-label="分栏"><ColumnsIcon /><Chevron /></Tool>
          </ToolRow>
        </ToolRows>
        <Stack>
          <SmallButton $dim aria-label="文字方向"><TextDirIcon /><Chevron /></SmallButton>
          <SmallButton $dim aria-label="对齐文本"><TextAlignIcon /><Chevron /></SmallButton>
          <SmallButton $dim aria-label="转换为 SmartArt"><SmartArtIcon /><Chevron /></SmallButton>
        </Stack>
      </GroupBody>
      <Launch dim>段落</Launch>
    </Group>

    <Group $w={403}>
      <GroupBody $pad={10}>
        <Gallery>
          <ShapeGallery />
          <GalleryArrows>
            <button aria-label="上一行"><Svg w={8} h={5} stroke="#aaa"><path d="M1 4l3-3 3 3" /></Svg></button>
            <button aria-label="下一行"><Chevron w={9} /></button>
            <button aria-label="其他"><Svg w={9} h={9}><path d="M0 1h9" /><path d="M1 4h7l-3.500 4z" /></Svg></button>
          </GalleryArrows>
        </Gallery>
        <BigButton $w={44} $ml={8}><ArrangeIcon /><BigLine>排列</BigLine><BigLine><Chevron /></BigLine></BigButton>
        <BigButton $w={60} $ml={4} $dim><QuickStyleIcon /><BigLine>快速样式</BigLine><BigLine><Chevron /></BigLine></BigButton>
        <Stack $ml={7}>
          <SmallButton $dim><FillIcon />形状填充<Chevron /></SmallButton>
          <SmallButton $dim><OutlineIcon />形状轮廓<Chevron /></SmallButton>
          <SmallButton $dim><EffectIcon />形状效果<Chevron /></SmallButton>
        </Stack>
      </GroupBody>
      <Launch dim>绘图</Launch>
    </Group>

    <Group $w={103}>
      <GroupBody $pad={14}>
        <Stack>
          <SmallButton><SearchIcon size={20} />查找</SmallButton>
          <SmallButton><ReplaceIcon />替换&nbsp;&nbsp;<Chevron /></SmallButton>
          <SmallButton><CursorIcon />选择<Chevron /></SmallButton>
        </Stack>
      </GroupBody>
      <GroupLabel>编辑</GroupLabel>
    </Group>

    <Group $w={68}>
      <GroupBody>
        <BigButton $w={67}><MicIcon /><BigLine>听写</BigLine><BigLine><Chevron /></BigLine></BigButton>
      </GroupBody>
      <GroupLabel>语音</GroupLabel>
    </Group>

    <Group $w={65}>
      <GroupBody>
        <BigButton $w={64}><IdeasIcon /><BigLine>设计</BigLine><BigLine>灵感</BigLine></BigButton>
      </GroupBody>
      <GroupLabel>设计器</GroupLabel>
    </Group>

    <Collapse aria-label="折叠功能区"><Chevron w={14} /></Collapse>
  </Ribbon>
)

const CartSlide = () => (
  <Slide>
    <SlideObject $x={32} $y={36}><XMark /></SlideObject>
    <SlideText as="h1" $x={96} $y={56} $size={44} $color="#141414">购物车系统设计与实践</SlideText>
    <SlideText $x={114} $y={109} $size={19} $bold>购物车功能需求</SlideText>

    <SlideObject $x={34} $y={162}><ArrowMark /></SlideObject>
    <SlideText as="h2" $x={70} $y={172} $size={37} $bold>功能需求</SlideText>
    <SlideObject $x={40} $y={555}><ArrowMark /></SlideObject>
    <SlideText as="h2" $x={75} $y={564} $size={37} $bold>业务需求</SlideText>

    {outline.map(({ dot, text }) => <Bullet key={text} $x={70} $y={dot} />)}
    {outline.map(({ y, text }) => <SlideText key={text} $x={115} $y={y} $size={25}>{text}</SlideText>)}

    <Lines viewBox="0 0 1296 728" preserveAspectRatio="none">
      <defs>
        <marker id="tip" viewBox="0 0 6 6" refX="5" refY="3" markerWidth="3" markerHeight="3" orient="auto">
          <path d="M0 0l6 3-6 3z" fill="#222" />
        </marker>
      </defs>
      {links.map(([x1, y1, x2, y2]) => (
        <line key={`${x2}-${y2}`} x1={x1} y1={y1} x2={x2} y2={y2} stroke="#333" strokeWidth="2" markerEnd="url(#tip)" />
      ))}
      <path d="M58 686h984" stroke="#b4b4b4" strokeWidth="1.500" />
    </Lines>

    <Node $x={308} $y={326} $w={220} $fill="#015652">购物车流程</Node>
    {steps.map(({ x, y, text }) => <Node key={text} $x={x} $y={y} $w={216} $fill="#b38600">{text}</Node>)}
    {flows.map(({ x, y, w, name }) => <Node key={name} $x={x} $y={y} $w={w} $fill="#00803f"><span><u>{name}</u>流程编排</span></Node>)}

    <Brand $x={1079} $y={665}>
      <NxLogo />
      <BrandText><strong>奈学教育</strong><small>IT人才职业能力提升平台</small></BrandText>
    </Brand>
  </Slide>
)

const App = () => {
  return <Screen>
    <GlobalStyle />
    <Desktop>
      <TitleBar>
        <TitleLeft>
          <PptBadge />
          <AutoSave>自动保存<Switch><input type="checkbox" role="switch" />关</Switch></AutoSave>
          <SaveIcon />
          <FileName>交易中台设计与实践(2)(1)<Caret /></FileName>
        </TitleLeft>
        <SearchBox><SearchIcon /><input type="search" placeholder="搜索(Alt+Q)" aria-label="搜索" /></SearchBox>
        <TitleRight>
          <WarnIcon />
          <UserName>bawang dragon</UserName>
          <Avatar>BD</Avatar>
          <PenIcon />
          <WindowButtons>
            <WindowButton aria-label="最小化"><Svg w={12} h={12}><path d="M0 6h12" /></Svg></WindowButton>
            <WindowButton aria-label="还原"><Svg w={13} h={13}><path d="M1 4h8v8H1zM4 4V1h8v8H9" /></Svg></WindowButton>
            <WindowButton aria-label="关闭"><Svg w={12} h={12}><path d="M1 1l10 10M11 1 1 11" /></Svg></WindowButton>
          </WindowButtons>
        </TitleRight>
      </TitleBar>

      <TabBar>
        {tabs.map((tab, index) => <Tab key={tab} $first={index === 0} $active={tab === '开始'}>{tab}</Tab>)}
        <TabActions>
          <ActionButton $w={68}><Svg w={15} h={15}><circle cx="7.500" cy="7.500" r="6.500" /><circle cx="7.500" cy="7.500" r="3" fill="currentColor" /></Svg>录制</ActionButton>
          <ActionButton $w={36} aria-label="批注"><Svg w={14} h={14}><path d="M1 1h12v9H6l-3 3v-3H1z" /></Svg></ActionButton>
          <ActionButton $w={70} $primary><Svg w={14} h={14} strokeWidth="1.300"><path d="M3 6H1v7h11v-3M4 9c0-4 3-5 6-5V1l3 4-3 4V6C7 6 5 7 4 9z" /></Svg>共享</ActionButton>
        </TabActions>
      </TabBar>

      <RibbonBar />

      <Workspace>
        <ThumbPanel>
          <ThumbList>
            {thumbs.map(({ n, Art, active }) => (
              <ThumbRow key={n} $active={active}>{n}<ThumbCard $active={active} aria-label={`幻灯片 ${n}`}><Art /></ThumbCard></ThumbRow>
            ))}
          </ThumbList>
          <ScrollTrack $w={24}>
            <Triangle />
            <ScrollSpace $grow={17} />
            <ScrollThumb $w={10} $h={50} />
            <ScrollSpace $grow={83} />
            <Triangle down />
          </ScrollTrack>
        </ThumbPanel>

        <Editor>
          <StageRow>
            <Stage><CartSlide /></Stage>
            <ScrollTrack $w={20}>
              <Triangle />
              <ScrollSpace $grow={19} />
              <ScrollThumb $w={9} $h={22} />
              <ScrollSpace $grow={81} />
              <Stack>
                <Triangle down />
                <DoubleTriangle />
                <DoubleTriangle down />
              </Stack>
              <ScrollSpace $grow={3} />
            </ScrollTrack>
          </StageRow>
          <Notes>单击此处添加备注</Notes>
        </Editor>
      </Workspace>

      <StatusBar>
        <span>幻灯片 第 16 张，共 83 张</span>
        <StatusItem $ml={36}>中文(中国)</StatusItem>
        <StatusItem $ml={17}><Svg w={16} h={17}><circle cx="7" cy="3" r="2" /><path d="M1 5l4 2-1 8M13 5 9 7l1 3M8 10l6 6M14 10l-6 6" /></Svg>辅助功能: 调查</StatusItem>
        <StatusRight>
          <StatusItem><Svg w={18} h={18}><path d="M0 8h18M0 12h18M0 17h18M6 5l3-3 3 3" /></Svg>备注</StatusItem>
          <StatusItem $ml={17}><Svg w={17} h={16}><path d="M8 11H1V2h14v5M5 14h3" /><circle cx="12" cy="11" r="2.500" strokeWidth="2.500" /></Svg>显示器设置</StatusItem>
          <StatusItem $ml={22} as="span">
            <ViewButton $active aria-label="普通视图"><Svg w={16} h={15}><path d="M1 1h14v12H1zM4 1v12M7 4h5v4H7zM4 10h11" /></Svg></ViewButton>
          </StatusItem>
          <ViewButton aria-label="幻灯片浏览"><Svg w={17} h={16}><path d="M1 1h5v5H1zM10 1h6v5h-6zM1 10h5v5H1zM10 10h6v5h-6z" /></Svg></ViewButton>
          <ViewButton aria-label="阅读视图"><Svg w={16} h={16}><path d="M8 3C6 1 3 1 1 1v12c2 0 5 0 7 2 2-2 5-2 7-2V1c-2 0-5 0-7 2zM8 3v12M3 5h3M3 9h3M10 5h3M10 9h3" /></Svg></ViewButton>
          <ViewButton aria-label="放映"><Svg w={16} h={16}><path d="M0 1h16M2 1v9h12V1M8 10v5M4 15h8M6 5h4" /></Svg></ViewButton>
          <StatusItem aria-label="缩小" $ml={7}><Svg w={10} h={10}><path d="M0 5h10" /></Svg></StatusItem>
          <ZoomRange type="range" min="10" max="190" defaultValue="44" aria-label="缩放" />
          <StatusItem aria-label="放大"><Svg w={10} h={10}><path d="M0 5h10M5 0v10" /></Svg></StatusItem>
          <StatusItem $ml={14}>44%</StatusItem>
          <StatusItem $ml={17} aria-label="适应窗口"><Svg w={17} h={17}><path d="M5 5h7v7H5zM6 3l2.500-2L11 3M6 14l2.500 2 2.500-2M3 6 1 8.500 3 11M14 6l2 2.500-2 2.500" /></Svg></StatusItem>
        </StatusRight>
      </StatusBar>

      <Taskbar>
        <Weather>
          <Svg w={32} h={20} stroke="none"><path d="M7 19a6 6 0 0 1 0-11 10 8 0 0 1 17-1 6 6 0 0 1 2 12z" fill="#a9bbd6" /><path d="M7 12a10 8 0 0 1 17-5c-6-1-10 3-17 5z" fill="#d2dced" /></Svg>
          <span>25℃<br />阴</span>
        </Weather>
        <Apps>
          <AppButton aria-label="开始"><Svg w={28} h={28} stroke="none" fill="#1585c9"><path d="M0 0h13.500v13.500H0zM14.500 0H28v13.500H14.500z" fill="#2d9ad6" /><path d="M0 14.500h13.500V28H0zM14.500 14.500H28V28H14.500z" fill="#0f72bb" /></Svg></AppButton>
          <AppButton aria-label="搜索"><SearchIcon size={27} sw={1.900} /></AppButton>
          <AppButton aria-label="任务视图"><Svg w={28} h={28} stroke="none"><rect x="1" y="8" width="21" height="19" rx="1" fill="#333a40" /><rect x="9" y="1" width="19" height="17" rx="1" fill="#e8eaec" opacity=".8" /></Svg></AppButton>
          <AppButton aria-label="IntelliJ IDEA"><Svg w={28} h={28} stroke="none"><path d="M8 0l6 4-4 22-9 2 1-9-2-4 3-9z" fill="#e8467c" /><path d="M3 6l6 2-3 8-6-1z" fill="#f0903c" /><path d="M15 2l6-1 3 6 4 1-2 9 1 7-8 4-7-4z" fill="#2588d8" /><path d="M6 6h16v17H6z" fill="#16121a" /><path d="M9 9h3M10.500 9v5M9 14h3M17 9v4c0 1-1 1.500-3 1M9 19h6" stroke="#fff" strokeWidth="1.400" /></Svg></AppButton>
          <AppButton $open aria-label="文件资源管理器"><Svg w={30} h={28} stroke="none"><path d="M1 1h11l2 4h-13z" fill="#c98f10" /><path d="M1 5h28v21H1z" fill="#f0bd32" /><path d="M6 27v-6l3-3h13l3 3v6z" fill="#1b75c2" /></Svg></AppButton>
          <AppButton $open aria-label="PowerPoint"><PptIcon size={28} /></AppButton>
          <AppButton $active aria-label="会议"><Svg w={24} h={24} stroke="none"><rect x="1" y="1" width="22" height="22" rx="3" fill="#eaf2fb" /><circle cx="12" cy="12" r="10" fill="#125ed6" /><path d="M6 12h12c0 3.500-2.500 6-6 6s-6-2.500-6-6z" fill="#fff" /><path d="M17 13V7h-3" stroke="#fff" strokeWidth="2" /></Svg></AppButton>
        </Apps>
        <Tray>
          <TrayGroup>
            <Svg w={15} h={10}><path d="M1 9l6.500-7L14 9" /></Svg>
            <Svg w={20} h={18} stroke="none"><path d="M1 14V7l7-6 8 4 1 10H3z" fill="#555b60" /><circle cx="14" cy="12" r="6" fill="#cf2f2c" /><path d="m12 10 4 4M16 10l-4 4" stroke="#fff" /></Svg>
            <Svg w={16} h={20} stroke="#24569c"><rect x="5" y="1" width="6" height="12" rx="3" /><path d="M2 9c0 9 12 9 12 0M8 16v4" /></Svg>
          </TrayGroup>
          <TrayLanguage>英</TrayLanguage>
          <Svg w={20} h={16}><path d="M1 6c5-6 13-6 18 0M4 9c4-4 8-4 12 0M7 12c2-2 4-2 6 0" strokeWidth="2" /><circle cx="10" cy="14" r="1.500" fill="currentColor" /></Svg>
          <Svg w={20} h={16}><path d="M1 5h4l4-4v14l-4-4H1zM12 5c1 2 1 4 0 6M14 3c3 3 3 7 0 10M16 1c4 4 4 10 0 14" /></Svg>
          <Svg w={20} h={14}><rect x="1" y="1" width="15" height="11" rx="2" /><path d="M3 3h9v7H3z" fill="currentColor" /><path d="M18 4v5" strokeWidth="2" /></Svg>
          <Clock>20:15<br />2022/6/9</Clock>
        </Tray>
      </Taskbar>
    </Desktop>

    <PauseTag>暂停</PauseTag>
    <Watermark $side="left" $top={892} $size={20}>更多课程:www.vipc9.com</Watermark>
    <Watermark $side="right" $top={861} $size={19}>一手v：qianren03</Watermark>
  </Screen>
}

export default App
